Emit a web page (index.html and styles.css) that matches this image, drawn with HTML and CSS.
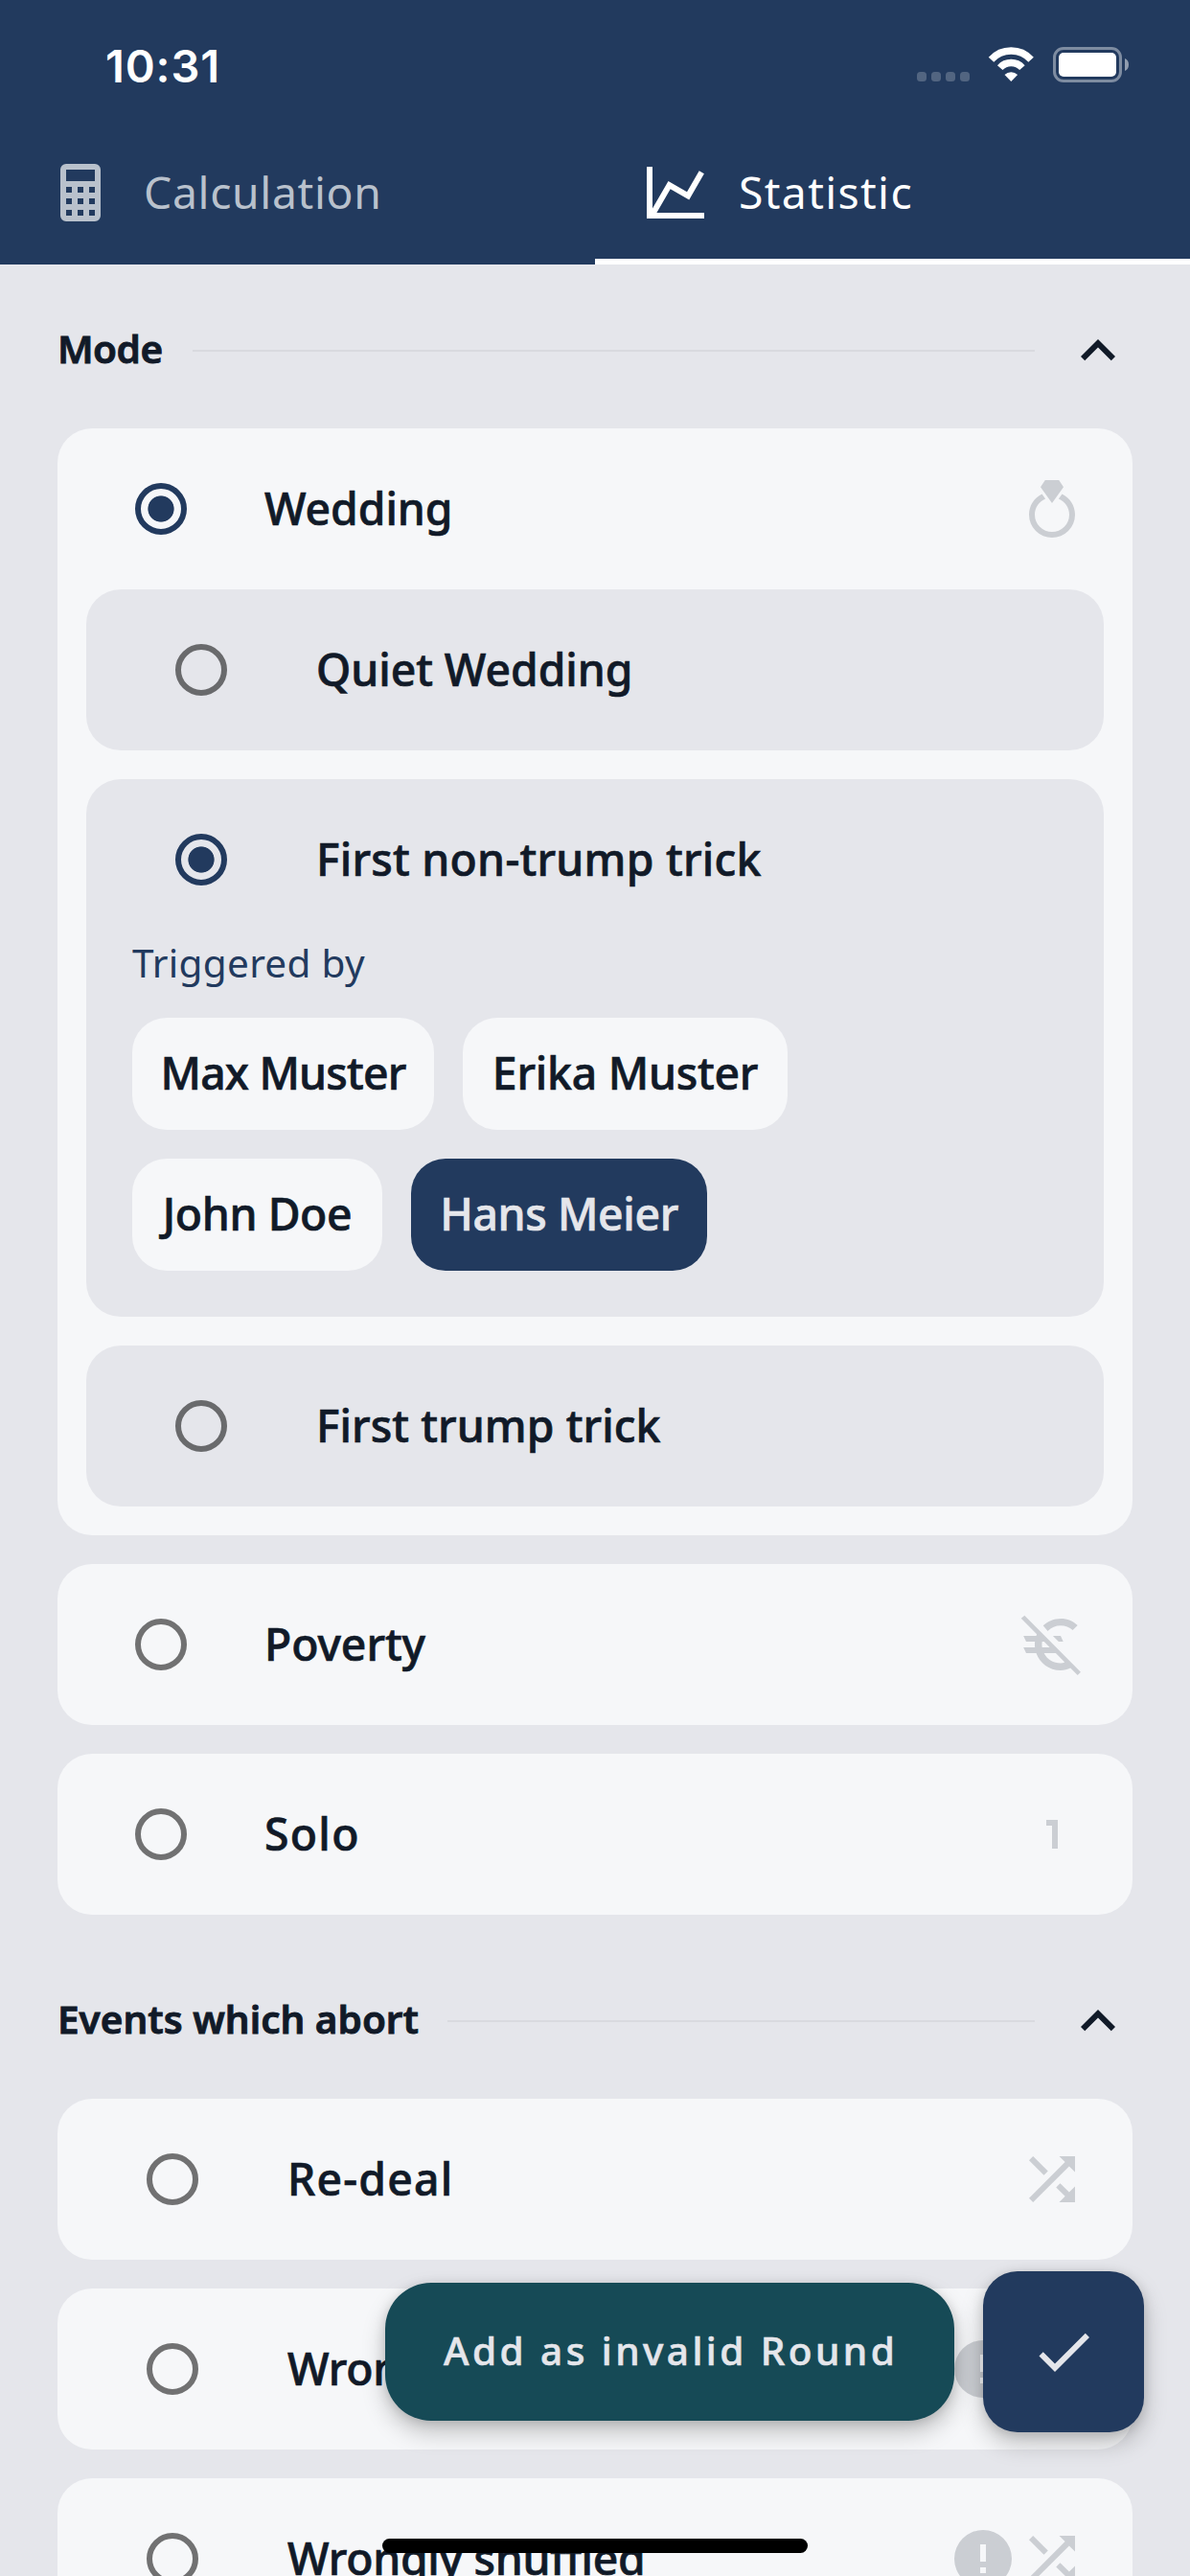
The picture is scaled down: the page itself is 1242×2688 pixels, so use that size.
FILE: index.html
```html
<!DOCTYPE html>
<html lang="en">
<head>
<meta charset="utf-8">
<title>Statistic</title>
<link rel="stylesheet" href="styles.css">
</head>
<body>
<svg class="defs" aria-hidden="true">
  <symbol id="chevron-up" viewBox="0 0 24 24"><path d="M7.41,15.41L12,10.83L16.59,15.41L18,14L12,8L6,14L7.41,15.41Z"/></symbol>
  <symbol id="shuffle" viewBox="0 0 24 24"><path d="M14.83,13.41L13.42,14.82L16.55,17.95L14.5,20H20V14.5L17.96,16.54L14.83,13.41M14.5,4L16.54,6.04L4,18.59L5.41,20L17.96,7.46L20,9.5V4M10.59,9.17L5.41,4L4,5.41L9.17,10.58L10.59,9.17Z"/></symbol>
  <symbol id="alert" viewBox="0 0 24 24"><path d="M13,13H11V7H13M13,17H11V15H13M12,2A10,10 0 0,0 2,12A10,10 0 0,0 12,22A10,10 0 0,0 22,12A10,10 0 0,0 12,2Z"/></symbol>
</svg>

<div class="screen">
  <header class="header">
    <div class="status">
      <span class="time">10:31</span>
      <svg class="indicators" viewBox="0 0 222 38">
        <g fill="#fff" fill-opacity=".22">
          <rect x="0" y="26" width="10" height="10" rx="3.5"/>
          <rect x="15" y="26" width="10" height="10" rx="3.5"/>
          <rect x="30" y="26" width="10" height="10" rx="3.5"/>
          <rect x="45" y="26" width="10" height="10" rx="3.5"/>
        </g>
        <g transform="translate(74 0)">
          <path d="M3.5 13.3A28 28 0 0 1 45.1 13.3M12.7 21.6A15.6 15.6 0 0 1 35.9 21.6" fill="none" stroke="#fff" stroke-width="7.4"/>
          <path d="M17.5 28.9A10 10 0 0 1 31.1 28.9L24.3 36Z" fill="#fff"/>
        </g>
        <rect x="143.5" y="1.5" width="69" height="34" rx="9.5" fill="none" stroke="#fff" stroke-opacity=".42" stroke-width="3"/>
        <rect x="148" y="6" width="60" height="25" rx="5" fill="#fff"/>
        <path d="M217 12C219.700 13 221 15.500 221 18.500S219.700 24 217 25Z" fill="#fff" fill-opacity=".5"/>
      </svg>
    </div>
    <nav class="tabs">
      <a class="tab tab-calculation">
        <svg class="icon" viewBox="0 0 24 24"><path d="M7,2H17A2,2 0 0,1 19,4V20A2,2 0 0,1 17,22H7A2,2 0 0,1 5,20V4A2,2 0 0,1 7,2M7,4V8H17V4H7M7,10V12H9V10H7M11,10V12H13V10H11M15,10V12H17V10H15M7,14V16H9V14H7M11,14V16H13V14H11M15,14V16H17V14H15M7,18V20H9V18H7M11,18V20H13V18H11M15,18V20H17V18H15Z"/></svg>
        <span>Calculation</span>
      </a>
      <a class="tab tab-statistic active">
        <svg class="icon" viewBox="0 0 24 24"><path d="M16,11.78L20.24,4.45L21.97,5.45L16.74,14.5L10.23,10.75L5.46,19H22V21H2V3H4V17.54L9.5,8L16,11.78Z"/></svg>
        <span>Statistic</span>
      </a>
    </nav>
  </header>

  <main class="content">
    <section class="section">
      <div class="section-head">
        <h2 class="section-title title-mode">Mode</h2>
        <span class="rule"></span>
        <svg class="icon"><use href="#chevron-up"/></svg>
      </div>
      <div class="card">
        <div class="row">
          <span class="radio checked"></span>
          <span class="label">Wedding</span>
          <span class="icons">
            <svg class="icon" viewBox="0 0 24 24"><path d="M12,10L8,4.400L9.600,2H14.400L16,4.400L12,10M15.500,6.800L14.300,8.500C16.500,9.400 18,11.500 18,14A6,6 0 0,1 12,20A6,6 0 0,1 6,14C6,11.500 7.500,9.400 9.700,8.500L8.500,6.800C5.800,8.100 4,10.800 4,14A8,8 0 0,0 12,22A8,8 0 0,0 20,14C20,10.800 18.200,8.100 15.500,6.800Z"/></svg>
          </span>
        </div>
        <div class="options">
          <div class="option">
            <div class="row wide"><span class="radio"></span><span class="label">Quiet Wedding</span></div>
          </div>
          <div class="option">
            <div class="row wide"><span class="radio checked"></span><span class="label label-non-trump">First non-trump trick</span></div>
            <div class="trigger">
              <div class="trigger-label">Triggered by</div>
              <div class="chips">
                <span class="chip chip-max">Max Muster</span>
                <span class="chip chip-erika">Erika Muster</span>
                <span class="chip chip-john">John Doe</span>
                <span class="chip chip-hans selected">Hans Meier</span>
              </div>
            </div>
          </div>
          <div class="option">
            <div class="row wide"><span class="radio"></span><span class="label label-trump">First trump trick</span></div>
          </div>
        </div>
      </div>
      <div class="card">
        <div class="row">
          <span class="radio"></span>
          <span class="label">Poverty</span>
          <span class="icons">
            <svg class="icon" viewBox="0 0 24 24"><path fill-rule="evenodd" d="M2.440 1.900L21.980 21.560L20.900 22.670L18.400 20.200C17.400 20.700 16.200 21 15 21C11 21 7.750 18.500 6.500 15H3L2.050 13H6.050C6 12.700 6 12.300 6 12C6 11.700 6 11.300 6.050 11H3L2.050 9H6.500L6.700 8.400L1.250 2.950ZM8.550 11C8.450 11.700 8.450 12.300 8.550 13H11.200L9.250 11ZM9.200 15C10.300 17.200 12.500 18.500 15 18.500C15.500 18.500 16 18.400 16.400 18.200L13.300 15ZM12.300 9H15L15.900 11H14.300ZM8.900 5.450C10.500 3.900 12.700 3 15.100 3C17.300 3 19.300 3.900 20.900 5.300L19.200 7C18.100 6 16.600 5.450 15 5.450C13.300 5.450 11.700 6.100 10.500 7.300Z"/></svg>
          </span>
        </div>
      </div>
      <div class="card">
        <div class="row">
          <span class="radio"></span>
          <span class="label label-solo">Solo</span>
          <span class="icons">
            <svg class="icon" viewBox="0 0 24 24"><path d="M14,7V17H12V9H10V7H14Z"/></svg>
          </span>
        </div>
      </div>
    </section>

    <section class="section">
      <div class="section-head">
        <h2 class="section-title">Events which abort</h2>
        <span class="rule"></span>
        <svg class="icon"><use href="#chevron-up"/></svg>
      </div>
      <div class="card">
        <div class="row wide">
          <span class="radio"></span>
          <span class="label label-redeal">Re-deal</span>
          <span class="icons"><svg class="icon"><use href="#shuffle"/></svg></span>
        </div>
      </div>
      <div class="card">
        <div class="row wide">
          <span class="radio"></span>
          <span class="label label-wrongly">Wrongly dealt</span>
          <span class="icons"><svg class="icon"><use href="#alert"/></svg><svg class="icon"><use href="#shuffle"/></svg></span>
        </div>
      </div>
      <div class="card">
        <div class="row wide">
          <span class="radio"></span>
          <span class="label label-wrongly">Wrongly shuffled</span>
          <span class="icons"><svg class="icon"><use href="#alert"/></svg><svg class="icon"><use href="#shuffle"/></svg></span>
        </div>
      </div>
    </section>
  </main>

  <div class="actions">
    <button class="add-round">Add as invalid Round</button>
    <button class="confirm" aria-label="Confirm">
      <svg class="icon" viewBox="0 0 24 24"><path d="M21,7L9,19L3.500,13.500L4.910,12.090L9,16.170L19.590,5.590L21,7Z"/></svg>
    </button>
  </div>
  <div class="home-indicator"></div>
</div>
</body>
</html>
```
FILE: styles.css
```css
* {
  box-sizing: border-box;
}

body {
  margin: 0;
  font-family: "Noto Sans", "Open Sans", sans-serif;
  color: #111a28;
}

.defs {
  display: none;
}

.screen {
  position: relative;
  width: 1242px;
  height: 2688px;
  overflow: hidden;
  background: #e5e6eb;
}

.icon {
  display: block;
  flex: none;
  width: 72px;
  height: 72px;
  fill: currentColor;
}

/* Header */

.header {
  height: 276px;
  background: #223a5e;
}

.status {
  display: flex;
  align-items: center;
  justify-content: space-between;
  height: 126px;
  padding: 10px 63px 0 110px;
}

.time {
  font: 600 47px/1 Inter, sans-serif;
  letter-spacing: 0.85px;
  color: #fff;
}

.indicators {
  width: 222px;
  height: 38px;
}

.tabs {
  display: grid;
  grid-template-columns: 1fr 1fr;
  height: 150px;
}

.tab {
  display: flex;
  align-items: center;
  gap: 30px;
  padding-left: 48px;
  border-bottom: 0 solid #fff;
  font-size: 46.3px;
  color: #b9c1cc;
}

.tab span {
  padding-bottom: 2px;
}

.tab-calculation {
  letter-spacing: 0.66px;
}

.tab-statistic {
  letter-spacing: 1.35px;
}

.tab.active {
  padding-top: 6px;
  border-bottom-width: 6px;
  color: #fff;
}

/* Sections */

.content {
  display: flex;
  flex-direction: column;
  gap: 30px;
  padding: 9px 60px 0;
}

.section {
  display: flex;
  flex-direction: column;
  gap: 30px;
}

.section-head {
  display: flex;
  align-items: center;
  gap: 30px;
  height: 162px;
  margin-bottom: -30px;
}

.section-title {
  margin: 0;
  padding-bottom: 3px;
  font-size: 40.5px;
  font-weight: 600;
  line-height: 1.3;
  -webkit-text-stroke: 0.9px currentColor;
}

.title-mode {
  min-width: 111px;
  letter-spacing: -0.5px;
}

.rule {
  flex: 1;
  height: 2px;
  background: #d9dadf;
}

/* Cards */

.card {
  flex: none;
  border-radius: 36px;
  background: #f6f7f9;
}

.row {
  display: flex;
  align-items: center;
  gap: 81px;
  height: 168px;
  padding: 0 48px 0 81px;
}

.row.wide {
  gap: 93px;
  padding-left: 93px;
}

.radio {
  flex: none;
  width: 54px;
  height: 54px;
  border: 6px solid rgba(0, 0, 0, 0.54);
  border-radius: 50%;
}

.radio.checked {
  border-color: #223a5e;
  background: radial-gradient(circle, #223a5e 13.2px, transparent 14px);
}

.label {
  font-size: 46.3px;
  font-weight: 500;
  line-height: 1.3;
  letter-spacing: -0.05px;
  white-space: nowrap;
  -webkit-text-stroke: 0.7px currentColor;
}

.label-non-trump {
  letter-spacing: 0.25px;
}

.label-trump {
  letter-spacing: 0.08px;
}

.label-solo {
  letter-spacing: 1.3px;
}

.label-redeal {
  letter-spacing: 1.2px;
}

.label-wrongly {
  letter-spacing: -0.29px;
}

.icons {
  display: flex;
  margin-left: auto;
  color: #cbced3;
}

.options {
  display: flex;
  flex-direction: column;
  gap: 30px;
  padding: 0 30px 30px;
}

.option {
  border-radius: 36px;
  background: #e5e6eb;
}

.trigger {
  padding: 0 48px 48px;
}

.trigger-label {
  margin-bottom: 34px;
  font-size: 40.5px;
  line-height: 47px;
  letter-spacing: 0.3px;
  color: #223a5e;
}

.chips {
  display: flex;
  flex-wrap: wrap;
  gap: 30px;
  width: 720px;
}

.chip {
  display: flex;
  align-items: center;
  justify-content: center;
  height: 117px;
  padding-bottom: 2px;
  border-radius: 36px;
  background: #f6f7f9;
  font-size: 46.3px;
  font-weight: 500;
  white-space: nowrap;
  -webkit-text-stroke: 0.7px currentColor;
}

.chip-max {
  width: 315px;
  letter-spacing: -0.8px;
}

.chip-erika {
  width: 339px;
  letter-spacing: -0.24px;
}

.chip-john {
  width: 261px;
  letter-spacing: -0.4px;
}

.chip-hans {
  width: 309px;
  letter-spacing: -0.37px;
}

.chip.selected {
  background: #223a5e;
  color: #e5e6eb;
}

/* Floating actions */

.actions {
  position: absolute;
  right: 48px;
  bottom: 150px;
  display: flex;
  align-items: center;
  gap: 30px;
}

.add-round,
.confirm {
  border: 0;
  color: #e5e6eb;
  box-shadow: 0 12px 24px rgba(0, 0, 0, 0.22), 0 2px 12px rgba(0, 0, 0, 0.13);
}

.add-round {
  width: 594px;
  height: 144px;
  padding: 0 0 3px 61px;
  border-radius: 48px;
  background: #164a56;
  font: 500 40.5px "Noto Sans", sans-serif;
  letter-spacing: 3.45px;
  text-align: left;
  white-space: nowrap;
  -webkit-text-stroke: 0.6px currentColor;
}

.confirm {
  display: flex;
  align-items: center;
  justify-content: center;
  width: 168px;
  height: 168px;
  padding: 0;
  border-radius: 36px;
  background: #223a5e;
}

.home-indicator {
  position: absolute;
  bottom: 24px;
  left: 399px;
  width: 444px;
  height: 15px;
  border-radius: 8px;
  background: #000;
}
```
